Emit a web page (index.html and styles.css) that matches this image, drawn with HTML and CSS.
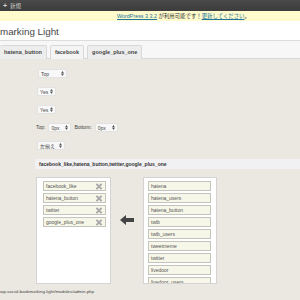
FILE: index.html
```html
<!DOCTYPE html>
<html>
<head>
<meta charset="utf-8">
<link rel="stylesheet" href="styles.css">
</head>
<body>
<div class="adminbar"><span class="plus">+</span><span class="new">新規</span></div>
<div class="notice"><a class="link">WordPress 3.3.2</a> が利用可能です！<a class="link">更新してください</a>。</div>
<div class="header"><h2 class="title">marking Light</h2></div>
<div class="tabs">
  <div class="tab first">hatena_button</div>
  <div class="tab active">facebook</div>
  <div class="tab">google_plus_one</div>
</div>
<div class="content">
  <div class="row"><div class="select s-top">Top<svg class="ud" viewBox="0 0 4 7" width="3" height="5"><path d="M2 0L4 3H0Z M2 7L0 4H4Z" fill="#555"/></svg></div></div>
  <div class="row"><div class="select s-yes">Yes<svg class="ud" viewBox="0 0 4 7" width="3" height="5"><path d="M2 0L4 3H0Z M2 7L0 4H4Z" fill="#555"/></svg></div></div>
  <div class="row"><div class="select s-yes">Yes<svg class="ud" viewBox="0 0 4 7" width="3" height="5"><path d="M2 0L4 3H0Z M2 7L0 4H4Z" fill="#555"/></svg></div></div>
  <div class="row margins">
    <span class="lbl">Top:</span><div class="select s-px">0px<svg class="ud" viewBox="0 0 4 7" width="3" height="5"><path d="M2 0L4 3H0Z M2 7L0 4H4Z" fill="#555"/></svg></div>
    <span class="lbl">Bottom:</span><div class="select s-px">0px<svg class="ud" viewBox="0 0 4 7" width="3" height="5"><path d="M2 0L4 3H0Z M2 7L0 4H4Z" fill="#555"/></svg></div>
  </div>
  <div class="row"><div class="select s-align">左揃え<svg class="ud" viewBox="0 0 4 7" width="3" height="5"><path d="M2 0L4 3H0Z M2 7L0 4H4Z" fill="#555"/></svg></div></div>
  <div class="input">facebook_like,hatena_button,twitter,google_plus_one</div>
  <div class="lists">
    <div class="box left">
      <div class="item">facebook_like<svg class="x" viewBox="0 0 8 8" width="8" height="7"><path d="M1 1L7 7M7 1L1 7" stroke="#a8a8a8" stroke-width="2.2"/></svg></div>
      <div class="item">hatena_button<svg class="x" viewBox="0 0 8 8" width="8" height="7"><path d="M1 1L7 7M7 1L1 7" stroke="#a8a8a8" stroke-width="2.2"/></svg></div>
      <div class="item">twitter<svg class="x" viewBox="0 0 8 8" width="8" height="7"><path d="M1 1L7 7M7 1L1 7" stroke="#a8a8a8" stroke-width="2.2"/></svg></div>
      <div class="item">google_plus_one<svg class="x" viewBox="0 0 8 8" width="8" height="7"><path d="M1 1L7 7M7 1L1 7" stroke="#a8a8a8" stroke-width="2.2"/></svg></div>
    </div>
    <div class="arrow"><svg viewBox="0 0 14 10" width="14" height="10"><path d="M0 5L6 0V3H14V7H6V10Z" fill="#444"/></svg></div>
    <div class="box right">
      <div class="item">hatena</div>
      <div class="item">hatena_users</div>
      <div class="item">hatena_button</div>
      <div class="item">twib</div>
      <div class="item">twib_users</div>
      <div class="item">tweetmeme</div>
      <div class="item">twitter</div>
      <div class="item">livedoor</div>
      <div class="item">livedoor_users</div>
    </div>
  </div>
  <div class="status">wp-social-bookmarking-light/modules/admin.php</div>
</div>
</body>
</html>
```

FILE: styles.css
```css
html, body {
  margin: 0;
  padding: 0;
  width: 300px;
  height: 300px;
  overflow: hidden;
  background: #eae8e0;
  font-family: "Liberation Sans", "Noto Sans CJK JP", sans-serif;
  color: #333;
}
.adminbar {
  height: 11px;
  background: linear-gradient(#4a4a4a, #3c3c3c);
  display: flex;
  align-items: center;
  padding-left: 3px;
  gap: 3px;
  font-size: 5.5px;
  color: #cfcfcf;
  box-sizing: border-box;
}
.plus { font-weight: bold; font-size: 7px; }
.notice {
  height: 10px;
  background: #fffbcc;
  font-size: 5.4px;
  line-height: 10px;
  padding-left: 117px;
  color: #333;
  white-space: nowrap;
}
.link { color: #21759b; text-decoration: underline; }
.header {
  height: 20px;
  background: #fff;
  border-bottom: 1px solid #dcdcdc;
  box-sizing: border-box;
}
.title {
  margin: 0;
  padding-top: 5px;
  font-size: 9.8px;
  font-weight: normal;
  color: #464646;
  line-height: 12px;
}
.tabs {
  height: 18px;
  background: #f7f7f7;
  border-bottom: 1px solid #d8d8d8;
  box-sizing: border-box;
  display: flex;
  align-items: flex-end;
  gap: 3px;
}
.tab {
  height: 13px;
  margin-bottom: -1px;
  padding: 0 4px;
  border: 1px solid #d8d8d8;
  border-bottom: none;
  border-radius: 2px 2px 0 0;
  background: #ededed;
  font-size: 5.5px;
  font-weight: bold;
  color: #464646;
  line-height: 13px;
}
.tab.first { border-left: none; }
.tab.active { background: #f4f4f4; }
.content {
  padding: 10px 0 0 0;
}
.row {
  height: 18px;
  display: flex;
  align-items: flex-start;
  padding-left: 37px;
  font-size: 5px;
  color: #444;
}
.select {
  height: 9px;
  box-sizing: border-box;
  background: #f8f8f8;
  border: 1px solid #e2e2e2;
  border-radius: 2px;
  display: flex;
  align-items: center;
  justify-content: space-between;
  padding: 0 2px 0 2px;
  font-size: 5px;
  color: #444;
}
.s-top { width: 29px; margin-left: 1px; }
.s-yes { width: 19px; }
.s-px { width: 23px; }
.s-align { width: 28px; }
.margins { padding-left: 36px; gap: 3px; align-items: center; height: 18px; }
.margins { align-items: flex-start; }
.lbl { line-height: 9px; }
.ud { flex: none; }
.input {
  height: 10px;
  margin-left: 35px;
  background: #f1f0f2;
  font-size: 5px;
  font-weight: bold;
  color: #333;
  line-height: 10px;
  padding-left: 4px;
  white-space: nowrap;
}
.lists {
  display: flex;
  margin-top: 8px;
  padding-left: 36px;
  height: 107px;
}
.box {
  background: #fff;
  border: 1px solid #d4d4d4;
  box-sizing: border-box;
  height: 107px;
  overflow: hidden;
  padding-top: 3px;
  display: flex;
  flex-direction: column;
  gap: 2px;
}
.box.left { width: 75px; padding-left: 6px; }
.box.right { width: 74px; padding-left: 4px; }
.arrow {
  width: 32px;
  display: flex;
  justify-content: center;
  padding-top: 38px;
  box-sizing: border-box;
}
.item {
  flex: none;
  height: 10px;
  box-sizing: border-box;
  width: 63px;
  background: #f7f7e9;
  border: 1px solid #c4c4bc;
  font-size: 5px;
  line-height: 8px;
  color: #555;
  padding-left: 2px;
  display: flex;
  align-items: center;
  justify-content: space-between;
  padding-right: 2px;
}
.x { flex: none; }
.status {
  margin-top: 5px;
  font-size: 4.4px;
  color: #444;
  white-space: nowrap;
}
```
